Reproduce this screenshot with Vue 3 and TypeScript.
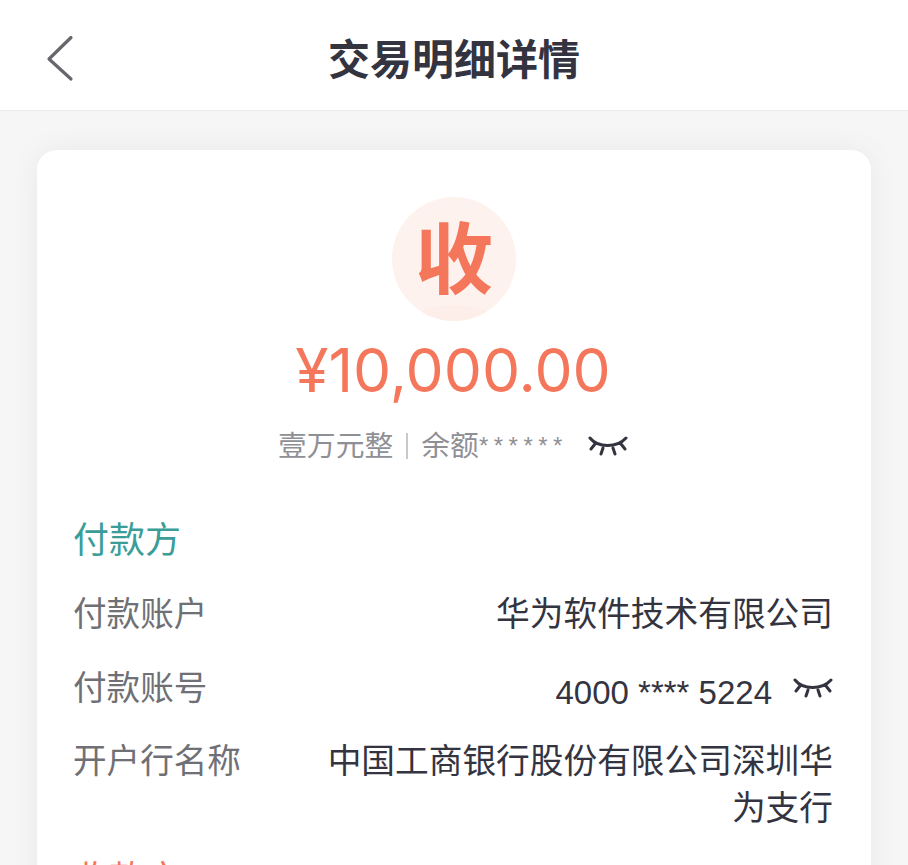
<script setup lang="ts">
interface Row {
  label: string
  value: string
  masked?: boolean
}

const payerRows: Row[] = [
  { label: '付款账户', value: '华为软件技术有限公司' },
  { label: '付款账号', value: '4000 **** 5224', masked: true },
  { label: '开户行名称', value: '中国工商银行股份有限公司深圳华为支行' },
]
</script>

<template>
  <div class="page">
    <header class="nav">
      <svg class="back" width="28" height="48" viewBox="0 0 28 48" fill="none">
        <path d="M25 3.5 L3 25 L25 45" stroke="#66676c" stroke-width="3.2" stroke-linecap="round" stroke-linejoin="round" />
      </svg>
      <h1 class="nav-title">交易明细详情</h1>
    </header>

    <main class="card">
      <div class="summary">
        <div class="badge">
          <span class="badge-text">收</span>
        </div>
        <div class="amount">¥10,000.00</div>
        <div class="sub">
          <span>壹万元整</span>
          <i class="sep"></i>
          <span>余额</span>
          <span class="stars">******</span>
          <svg class="eye eye-sub" width="40" height="24" viewBox="0 0 40 24" fill="none">
            <path d="M2 4 C10 14 29 14 38 4 M7 10 L3 15 M15 14 L13 20 M25 14 L27 20 M33 10 L37 15" stroke="#33343f" stroke-width="3" stroke-linecap="round" />
          </svg>
        </div>
      </div>

      <section class="section">
        <h2 class="section-title payer">付款方</h2>
        <div v-for="row in payerRows" :key="row.label" class="row">
          <span class="label">{{ row.label }}</span>
          <span class="value">
            <span :class="{ num: row.masked }">{{ row.value }}</span>
            <svg v-if="row.masked" class="eye eye-row" width="40" height="24" viewBox="0 0 40 24" fill="none">
              <path d="M2 4 C10 14 29 14 38 4 M7 10 L3 15 M15 14 L13 20 M25 14 L27 20 M33 10 L37 15" stroke="#33343f" stroke-width="3" stroke-linecap="round" />
            </svg>
          </span>
        </div>
      </section>

      <section class="section payee">
        <h2 class="section-title receiver">收款方</h2>
      </section>
    </main>
  </div>
</template>

<style>
html,
body {
  margin: 0;
  height: 100%;
  overflow: hidden;
  background: #f6f6f7;
}
</style>

<style scoped>
.page {
  width: 908px;
  height: 865px;
  overflow: hidden;
  background: #f6f6f7;
  font-family: "Liberation Sans", "Noto Sans CJK SC", sans-serif;
  color: #33343f;
}

.nav {
  position: relative;
  height: 110px;
  background: #fff;
  border-bottom: 1px solid #ececed;
  display: flex;
  align-items: center;
  justify-content: center;
}

.back {
  position: absolute;
  left: 46px;
  top: 34px;
}

.nav-title {
  margin: 0;
  padding-top: 12px;
  font-size: 42px;
  line-height: 56px;
  font-weight: 700;
  color: #33343f;
}

.card {
  margin: 39px 37px 0;
  padding: 0 38px 0 36px;
  height: 800px;
  background: #fff;
  border-radius: 20px;
  box-shadow: 0 0 30px rgba(0, 0, 0, 0.06);
}

.summary {
  display: flex;
  flex-direction: column;
  align-items: center;
  padding-top: 47px;
}

.badge {
  position: relative;
  overflow: hidden;
  width: 124px;
  height: 124px;
  margin-left: 2px;
  border-radius: 50%;
  background: #fef2ee;
  display: flex;
  align-items: center;
  justify-content: center;
}

/* soft swoosh along the bottom of the circle */
.badge::after {
  content: "";
  position: absolute;
  left: 18px;
  right: 18px;
  bottom: -24px;
  height: 40px;
  border-radius: 50%;
  background: #fdeee9;
}

.badge-text {
  position: relative;
  z-index: 1;
  padding-top: 4px;
  font-size: 78px;
  line-height: 84px;
  font-weight: 700;
  color: #f4775c;
}

.amount {
  margin-top: 13px;
  font-family: Inter, "Noto Sans CJK SC", sans-serif;
  font-size: 60.5px;
  line-height: 72px;
  font-weight: 400;
  color: #f4775c;
}

.sub {
  margin-top: 21px;
  display: flex;
  align-items: center;
  font-size: 28.8px;
  line-height: 38px;
  color: #8f9096;
}

.sep {
  width: 2px;
  height: 26px;
  margin: 0 13px;
  background: #c9c9cd;
}

.stars {
  font-size: 24px;
  letter-spacing: 5.5px;
}

.eye-sub {
  margin-left: 20px;
}

.section {
  margin-top: 51px;
}

.section-title {
  margin: 0;
  font-size: 36px;
  line-height: 50px;
  font-weight: 400;
}

.payer {
  color: #3a9d98;
}

.receiver {
  color: #f4775c;
}

.row {
  display: flex;
  justify-content: space-between;
  gap: 84px;
  margin-top: 26.5px;
  font-size: 33.6px;
  line-height: 47px;
}

.section-title + .row {
  margin-top: 25px;
}

.label {
  flex: none;
  color: #6f7075;
}

.value {
  display: flex;
  align-items: center;
  justify-content: flex-end;
  text-align: right;
  color: #33343f;
  font-size: 33.7px;
}

/* digits sit a little lower than the label in this row */
.num {
  white-space: nowrap;
  font-size: 33px;
  padding-top: 4px;
  margin-bottom: -4px;
}

.eye-row {
  margin-left: 21px;
}

.payee {
  margin-top: 23px;
}
</style>
